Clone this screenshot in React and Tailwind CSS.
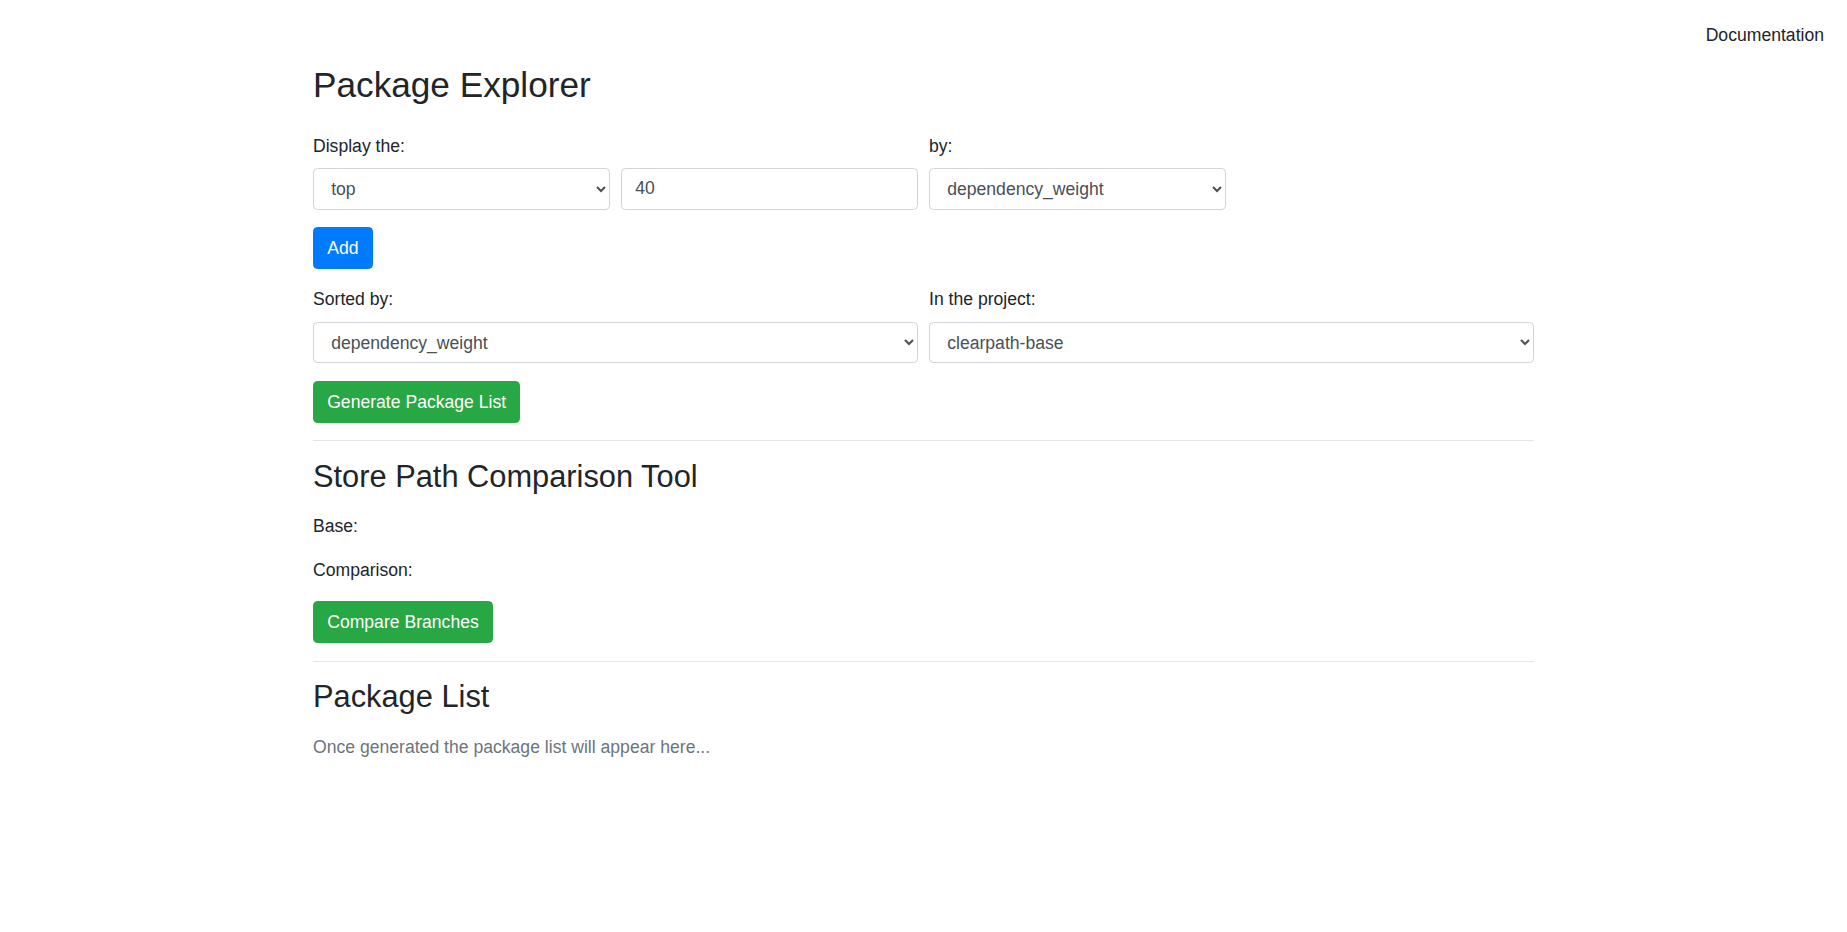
import React from "react";

const font = { fontFamily: '"Liberation Sans", Arial, Helvetica, sans-serif' };

function Select({ value, options }) {
  return (
    <select
      defaultValue={value}
      className="block w-full h-[41.8px] px-[13.2px] py-[6.6px] text-[17.6px] leading-[26.4px] text-[#495057] bg-white border border-[#ced4da] rounded-[4.4px]"
    >
      {options.map((o) => (
        <option key={o} value={o}>
          {o}
        </option>
      ))}
    </select>
  );
}

function Btn({ children, color }) {
  return (
    <button
      type="button"
      className={
        "inline-block px-[13.2px] py-[6.6px] text-[17.6px] leading-[26.4px] text-white border rounded-[4.4px] " +
        color
      }
    >
      {children}
    </button>
  );
}

export default function App() {
  return (
    <div className="min-h-screen bg-white text-[#212529] text-[17.6px] leading-[26.4px]" style={font}>
      <nav className="h-[64px] flex justify-end pt-[22px] pr-[23px]">
        <a className="text-[#212529]">Documentation</a>
      </nav>
      <div className="w-[1221px] mx-auto">
        <h2 className="text-[35.2px] leading-[1.2] font-normal mb-[26.4px]">Package Explorer</h2>
        <div className="grid grid-cols-4 gap-x-[11px]">
          <label className="col-span-2 block mb-[8.8px]">Display the:</label>
          <label className="col-span-2 block mb-[8.8px]">by:</label>
          <Select value="top" options={["top", "bottom"]} />
          <input
            type="text"
            defaultValue="40"
            className="block w-full h-[41.8px] px-[13.2px] py-[6.6px] text-[17.6px] leading-[26.4px] text-[#495057] bg-white border border-[#ced4da] rounded-[4.4px]"
          />
          <Select value="dependency_weight" options={["dependency_weight", "closure_size"]} />
        </div>
        <div className="mt-[17.6px]">
          <Btn color="bg-[#007bff] border-[#007bff]">Add</Btn>
        </div>
        <div className="mt-[17.6px] grid grid-cols-2 gap-x-[11px]">
          <label className="block mb-[8.8px]">Sorted by:</label>
          <label className="block mb-[8.8px]">In the project:</label>
          <Select value="dependency_weight" options={["dependency_weight", "closure_size"]} />
          <Select value="clearpath-base" options={["clearpath-base"]} />
        </div>
        <div className="mt-[17.6px]">
          <Btn color="bg-[#28a745] border-[#28a745]">Generate Package List</Btn>
        </div>
        <hr className="my-[17.6px] border-0 border-t border-black/10" />
        <h3 className="text-[30.8px] leading-[1.2] font-normal mb-[17.6px]">Store Path Comparison Tool</h3>
        <label className="block mb-[17.6px]">Base:</label>
        <label className="block mb-[17.6px]">Comparison:</label>
        <div>
          <Btn color="bg-[#28a745] border-[#28a745]">Compare Branches</Btn>
        </div>
        <hr className="my-[17.6px] border-0 border-t border-black/10" />
        <h3 className="text-[30.8px] leading-[1.2] font-normal mb-[17.6px]">Package List</h3>
        <p className="text-[#6c757d]">Once generated the package list will appear here...</p>
      </div>
    </div>
  );
}
